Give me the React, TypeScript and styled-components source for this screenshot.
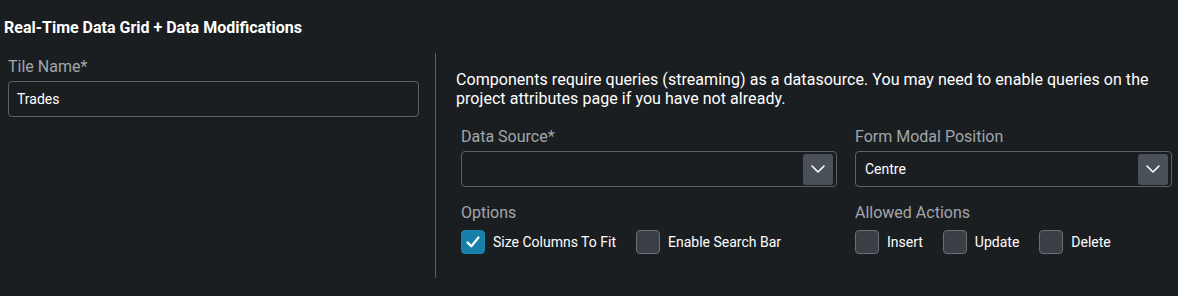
import styled, { createGlobalStyle } from 'styled-components';

const GlobalStyle = createGlobalStyle`
  html, body {
    margin: 0;
    padding: 0;
    background: #1b1e21;
  }
  body {
    font-family: Roboto, 'Liberation Sans', sans-serif;
    color: #ffffff;
  }
  * {
    box-sizing: border-box;
  }
`;

function Chevron() {
  return (
    <svg width="14" height="8" viewBox="0 0 14 8" fill="none">
      <path d="M1 1l6 6 6-6" stroke="#ffffff" strokeWidth="1.6" strokeLinecap="round" strokeLinejoin="round" />
    </svg>
  );
}

function Check({ checked, label }: { checked?: boolean; label: string }) {
  return (
    <CheckItem>
      <Box $checked={checked}>
        {checked && (
          <svg width="14" height="12" viewBox="0 0 14 12" fill="none">
            <path d="M1.5 6.5l3.8 3.8L12.5 1.5" stroke="#ffffff" strokeWidth="2.2" strokeLinecap="round" strokeLinejoin="round" />
          </svg>
        )}
      </Box>
      <CheckLabel>{label}</CheckLabel>
    </CheckItem>
  );
}

function Select({ value }: { value?: string }) {
  return (
    <SelectBox>
      <SelectValue>{value}</SelectValue>
      <ArrowButton>
        <Chevron />
      </ArrowButton>
    </SelectBox>
  );
}

export default function App() {
  return (
    <>
      <GlobalStyle />
      <Page>
        <Title>Real-Time Data Grid + Data Modifications</Title>
        <Body>
          <LeftPanel>
            <Label>Tile Name*</Label>
            <TextInput>Trades</TextInput>
          </LeftPanel>
          <RightPanel>
            <Notice>
              Components require queries (streaming) as a datasource. You may need to enable queries on the
              project attributes page if you have not already.
            </Notice>
            <FieldGrid>
              <Field>
                <Label>Data Source*</Label>
                <Select />
              </Field>
              <Field>
                <Label>Form Modal Position</Label>
                <Select value="Centre" />
              </Field>
              <Field>
                <Label>Options</Label>
                <CheckRow>
                  <Check checked label="Size Columns To Fit" />
                  <Check label="Enable Search Bar" />
                </CheckRow>
              </Field>
              <Field>
                <Label>Allowed Actions</Label>
                <CheckRow>
                  <Check label="Insert" />
                  <Check label="Update" />
                  <Check label="Delete" />
                </CheckRow>
              </Field>
            </FieldGrid>
          </RightPanel>
        </Body>
      </Page>
    </>
  );
}

const Page = styled.div`
  width: 1178px;
  height: 296px;
  background: #1b1e21;
  overflow: hidden;
`;

const Title = styled.h1`
  margin: 0;
  padding: 18px 4px 0;
  font-size: 16px;
  font-weight: 700;
  line-height: 20px;
  color: #ffffff;
`;

const Body = styled.div`
  display: flex;
  margin-top: 15px;
`;

const LeftPanel = styled.div`
  width: 436px;
  padding: 4px 16px 0 8px;
  border-right: 1px solid #5c6166;
  height: 225px;
`;

const RightPanel = styled.div`
  flex: 1;
  padding: 17px 6px 0 20px;
`;

const Label = styled.div`
  font-size: 16px;
  line-height: 20px;
  color: #a1a6ab;
  margin-bottom: 4px;
`;

const TextInput = styled.div`
  height: 36px;
  border: 1px solid #5c6166;
  border-radius: 4px;
  padding: 0 8px;
  display: flex;
  align-items: center;
  font-size: 14px;
  color: #ffffff;
`;

const Notice = styled.p`
  margin: 0;
  font-size: 16px;
  letter-spacing: 0.05px;
  line-height: 19px;
  color: #ffffff;
`;

const FieldGrid = styled.div`
  display: grid;
  grid-template-columns: 376px 317px;
  column-gap: 18px;
  row-gap: 16px;
  margin: 19px 0 0 5px;
`;

const Field = styled.div`
  display: flex;
  flex-direction: column;
`;

const SelectBox = styled.div`
  height: 36px;
  border: 1px solid #5c6166;
  border-radius: 4px;
  display: flex;
  align-items: center;
  justify-content: space-between;
  padding: 0 3px 0 9px;
`;

const SelectValue = styled.span`
  font-size: 14px;
  color: #ffffff;
`;

const ArrowButton = styled.div`
  width: 30px;
  height: 31px;
  border-radius: 3px;
  background: #4a5158;
  display: flex;
  align-items: center;
  justify-content: center;
`;

const CheckRow = styled.div`
  display: flex;
  gap: 20px;
  margin-top: 3px;
`;

const CheckItem = styled.div`
  display: flex;
  align-items: center;
  gap: 8px;
`;

const Box = styled.div<{ $checked?: boolean }>`
  width: 24px;
  height: 24px;
  border-radius: 4px;
  border: 1px solid ${(p) => (p.$checked ? '#1d86b0' : '#6a7077')};
  background: ${(p) => (p.$checked ? '#1780a9' : '#393f45')};
  display: flex;
  align-items: center;
  justify-content: center;
`;

const CheckLabel = styled.span`
  font-size: 14px;
  color: #ffffff;
`;
